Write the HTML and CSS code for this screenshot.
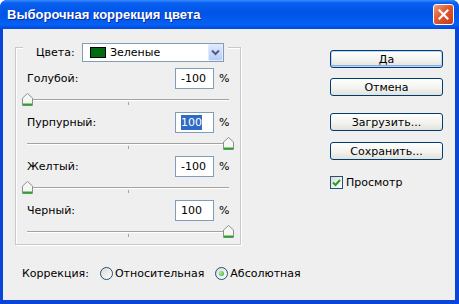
FILE: index.html
```html
<!DOCTYPE html>
<html lang="ru">

<head>
    <meta charset="UTF-8">
    <meta name="viewport" content="width=device-width, initial-scale=1.0">
    <title>Выборочная коррекция цвета</title>
    <link rel="stylesheet" href="styles.css">
</head>

<body>
    <div class="window">
        <div class="titlebar">
            <span class="title">Выборочная коррекция цвета</span>
            <span class="close">
                <svg width="11" height="11" viewBox="0 0 11 11"><path d="M1.5 1.5 L9.5 9.5 M9.5 1.5 L1.5 9.5" stroke="#fff" stroke-width="2.2" stroke-linecap="square"/></svg>
            </span>
        </div>
        <div class="client">
            <div class="left">
                <div class="group">
                    <div class="group-head">
                        <span>Цвета:</span>
                        <div class="combo">
                            <span class="swatch"></span>
                            <span class="combo-text">Зеленые</span>
                            <span class="drop">
                                <svg width="9" height="7" viewBox="0 0 9 7"><path d="M1 1.5 L4.5 5 L8 1.5" fill="none" stroke="#4d6185" stroke-width="2"/></svg>
                            </span>
                        </div>
                    </div>
                    <!-- каналы -->
                    <div class="channel">
                        <div class="row">
                            <span class="name">Голубой:</span>
                            <span class="field">-100</span>
                            <span class="pct">%</span>
                        </div>
                        <div class="slider">
                            <div class="track"></div>
                            <div class="tick"></div>
                            <svg class="thumb" width="11" height="13" viewBox="0 0 11 13"><path d="M5.5 0.5 L10.5 5 V12.5 H0.5 V5 Z" fill="#f6f6f2" stroke="#8e8f8f"/><path d="M1 11.5 H10" stroke="#2aa52a" stroke-width="2"/></svg>
                        </div>
                    </div>
                    <div class="channel">
                        <div class="row">
                            <span class="name">Пурпурный:</span>
                            <span class="field"><span class="sel">100</span></span>
                            <span class="pct">%</span>
                        </div>
                        <div class="slider">
                            <div class="track"></div>
                            <div class="tick"></div>
                            <svg class="thumb max" width="11" height="13" viewBox="0 0 11 13"><path d="M5.5 0.5 L10.5 5 V12.5 H0.5 V5 Z" fill="#f6f6f2" stroke="#8e8f8f"/><path d="M1 11.5 H10" stroke="#2aa52a" stroke-width="2"/></svg>
                        </div>
                    </div>
                    <div class="channel">
                        <div class="row">
                            <span class="name">Желтый:</span>
                            <span class="field">-100</span>
                            <span class="pct">%</span>
                        </div>
                        <div class="slider">
                            <div class="track"></div>
                            <div class="tick"></div>
                            <svg class="thumb" width="11" height="13" viewBox="0 0 11 13"><path d="M5.5 0.5 L10.5 5 V12.5 H0.5 V5 Z" fill="#f6f6f2" stroke="#8e8f8f"/><path d="M1 11.5 H10" stroke="#2aa52a" stroke-width="2"/></svg>
                        </div>
                    </div>
                    <div class="channel">
                        <div class="row">
                            <span class="name">Черный:</span>
                            <span class="field">100</span>
                            <span class="pct">%</span>
                        </div>
                        <div class="slider">
                            <div class="track"></div>
                            <div class="tick"></div>
                            <svg class="thumb max" width="11" height="13" viewBox="0 0 11 13"><path d="M5.5 0.5 L10.5 5 V12.5 H0.5 V5 Z" fill="#f6f6f2" stroke="#8e8f8f"/><path d="M1 11.5 H10" stroke="#2aa52a" stroke-width="2"/></svg>
                        </div>
                    </div>
                </div>
                <div class="mode">
                    <span class="mode-label">Коррекция:</span>
                    <span class="radio"></span>
                    <span class="opt">Относительная</span>
                    <span class="radio on"></span>
                    <span class="opt">Абсолютная</span>
                </div>
            </div>
            <div class="right">
                <span class="btn default">Да</span>
                <span class="btn">Отмена</span>
                <span class="btn load">Загрузить...</span>
                <span class="btn">Сохранить...</span>
                <div class="check-row">
                    <span class="check">
                        <svg width="9" height="9" viewBox="0 0 9 9"><path d="M1 4.5 L3.5 7 L8 2" fill="none" stroke="#21a121" stroke-width="2"/></svg>
                    </span>
                    <span>Просмотр</span>
                </div>
            </div>
        </div>
    </div>
</body>

</html>
```

FILE: styles.css
```css
* {
    margin: 0;
    padding: 0;
    box-sizing: border-box;
}

html,
body {
    width: 459px;
    height: 304px;
    overflow: hidden;
}

body {
    background: #fff;
    font-family: "DejaVu Sans", Tahoma, sans-serif;
    font-size: 11px;
    color: #000;
}

.window {
    width: 459px;
    height: 304px;
    display: flex;
    flex-direction: column;
    background: #0845d8;
    border-radius: 7px 7px 0 0;
    overflow: hidden;
}

/* заголовок окна */
.titlebar {
    flex: none;
    height: 29px;
    display: flex;
    align-items: center;
    padding: 0 5px 0 7px;
    background: linear-gradient(#3a8cff 0, #0860f0 10%, #0054e6 45%, #0560f4 85%, #0048dc 100%);
}

.title {
    flex: 1;
    color: #fff;
    font: bold 13px "Liberation Sans", sans-serif;
    text-shadow: 1px 1px #0c2a9e;
}

.close {
    width: 21px;
    height: 21px;
    display: flex;
    align-items: center;
    justify-content: center;
    border: 1px solid #fff;
    border-radius: 3px;
    background: linear-gradient(135deg, #f19c7c, #e0582f 45%, #c8391c);
}

.client {
    flex: 1;
    display: flex;
    margin: 0 4px 4px 3px;
    background: #efefef;
}

.left {
    width: 226px;
    margin-left: 12px;
}

/* группа с ползунками */
.group {
    margin-top: 18px;
    height: 198px;
    border: 1px solid #c9c9c6;
    box-shadow: 1px 1px 0 #fff, inset 1px 1px 0 #fff;
}

.group-head {
    width: 205px;
    height: 19px;
    margin: -5px 0 0 7px;
    padding: 0 4px 0 13px;
    display: flex;
    align-items: center;
    justify-content: space-between;
    background: #efefef;
}

.combo {
    width: 142px;
    height: 19px;
    display: flex;
    align-items: center;
    border: 1px solid #7f9db9;
    background: #fff;
}

.swatch {
    flex: none;
    width: 16px;
    height: 11px;
    margin-left: 7px;
    border: 1px solid #000;
    background: #006a12;
}

.combo-text {
    flex: 1;
    margin-left: 4px;
}

.drop {
    flex: none;
    width: 15px;
    height: 17px;
    display: flex;
    align-items: center;
    justify-content: center;
    border: 1px solid #e1e9fb;
    border-radius: 2px;
    background: linear-gradient(#dfe8fd, #b9cdf8);
}

.channel {
    height: 44px;
}

.group-head + .channel {
    margin-top: 6px;
}

.row {
    height: 21px;
    display: flex;
    align-items: center;
    padding-left: 11px;
}

.name {
    flex: 1;
}

.field {
    flex: none;
    width: 39px;
    height: 21px;
    display: flex;
    align-items: center;
    padding-left: 5px;
    border: 1px solid #7f9db9;
    background: #fff;
}

.sel {
    background: #316ac5;
    color: #fff;
    padding: 1px 0;
}

.pct {
    flex: none;
    width: 26px;
    padding-left: 5px;
}

.slider {
    position: relative;
    height: 23px;
    margin: 0 11px;
}

.track {
    position: absolute;
    left: 0;
    right: 0;
    top: 10px;
    height: 2px;
    border-top: 1px solid #a3a3a0;
    border-bottom: 1px solid #fff;
}

.tick {
    position: absolute;
    left: 50%;
    top: 13px;
    width: 1px;
    height: 3px;
    background: #a3a3a0;
}

.thumb {
    position: absolute;
    top: 4px;
    left: -5px;
}

.thumb.max {
    left: auto;
    right: -5px;
}

/* режим коррекции */
.mode {
    display: flex;
    align-items: center;
    height: 15px;
    margin-top: 21px;
    padding-left: 7px;
    white-space: nowrap;
}

.mode-label {
    margin-right: 11px;
}

.radio {
    flex: none;
    position: relative;
    width: 13px;
    height: 13px;
    margin-right: 2px;
    border: 1px solid #1c5180;
    border-radius: 50%;
    background: linear-gradient(135deg, #dcdad2, #fff);
}

.radio.on::after {
    content: "";
    position: absolute;
    left: 3px;
    top: 3px;
    width: 5px;
    height: 5px;
    border-radius: 50%;
    background: radial-gradient(circle at 35% 35%, #a8f0a0, #2fa52f);
}

.opt {
    margin-right: 11px;
}

/* кнопки справа */
.right {
    display: flex;
    flex-direction: column;
    margin-left: 89px;
    padding-top: 21px;
}

.btn {
    width: 113px;
    height: 18px;
    display: flex;
    align-items: center;
    justify-content: center;
    margin-bottom: 10px;
    border: 1px solid #003c74;
    border-radius: 3px;
    background: linear-gradient(#fff, #f1f1ed 60%, #e3e2da);
}

.btn.default {
    box-shadow: inset 0 0 0 1px #bcd4f6, inset 0 -1px 0 1px #89ade4;
}

.btn.load {
    margin-top: 7px;
    margin-bottom: 11px;
}

.check-row {
    display: flex;
    align-items: center;
    margin-top: 6px;
}

.check {
    flex: none;
    width: 13px;
    height: 13px;
    display: flex;
    align-items: center;
    justify-content: center;
    margin-right: 3px;
    border: 1px solid #1c5180;
    background: linear-gradient(135deg, #dcdad2, #fff);
}
```
